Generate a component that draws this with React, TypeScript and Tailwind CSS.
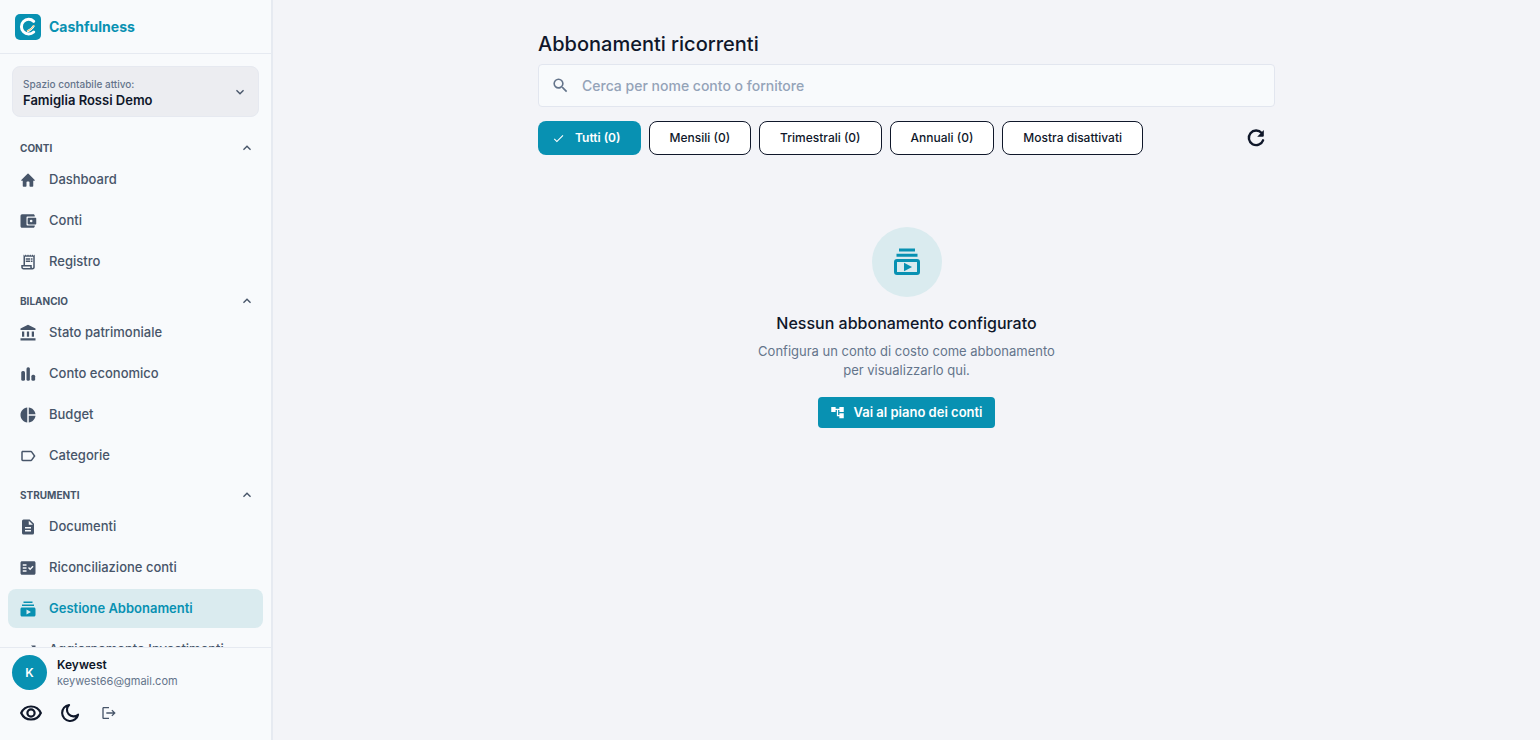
import { useState } from 'react';
import type { IconType } from 'react-icons';
import {
  MdAccountBalance,
  MdAccountTree,
  MdCheck,
  MdFactCheck,
  MdKeyboardArrowDown,
  MdKeyboardArrowUp,
  MdLabelOutline,
  MdLogout,
  MdOutlineReceiptLong,
  MdPieChart,
  MdSearch,
  MdSubscriptions,
  MdTrendingUp,
} from 'react-icons/md';

type IconProps = { size?: number; className?: string };

function HomeIcon({ size = 18, className }: IconProps) {
  return (
    <svg width={size} height={size} viewBox="0 0 24 24" fill="currentColor" className={className}>
      <path d="M10 20v-5c0-.6.4-1 1-1h2c.6 0 1 .4 1 1v5c0 .6.4 1 1 1h3c.6 0 1-.4 1-1v-7h1.700c.5 0 .7-.6.3-.9L12.700 3.600a1 1 0 0 0-1.300 0L3 12.100c-.4.300-.2.900.300.900H5v7c0 .6.400 1 1 1h3c.6 0 1-.4 1-1z" />
    </svg>
  );
}

function WalletIcon({ size = 18, className }: IconProps) {
  return (
    <svg width={size} height={size} viewBox="0 0 24 24" fill="currentColor" className={className}>
      <path d="M10 17V7c0-.6.400-1 1-1h10V5c0-1.100-.9-2-2-2H4a2 2 0 0 0-2 2v14c0 1.100.9 2 2 2h15c1.100 0 2-.9 2-2v-1H11c-.6 0-1-.4-1-1z" />
      <path fillRule="evenodd" d="M13 7.500c-.8 0-1.500.700-1.500 1.500v6c0 .8.700 1.500 1.500 1.500h9c.6 0 1-.4 1-1v-7c0-.6-.4-1-1-1h-9zm3.200 6.300a1.800 1.800 0 1 1 0-3.600 1.800 1.800 0 0 1 0 3.600z" />
    </svg>
  );
}

function BarsIcon({ size = 18, className }: IconProps) {
  return (
    <svg width={size} height={size} viewBox="0 0 24 24" fill="currentColor" className={className}>
      <rect x="3" y="8" width="5" height="13" rx="2" />
      <rect x="10" y="3" width="4.500" height="18" rx="2" />
      <rect x="16.500" y="13" width="5" height="8" rx="2" />
    </svg>
  );
}

function DocumentIcon({ size = 18, className }: IconProps) {
  return (
    <svg width={size} height={size} viewBox="0 0 24 24" fill="currentColor" className={className}>
      <path
        fillRule="evenodd"
        d="M14.200 2H6a2 2 0 0 0-2 2v16c0 1.100.9 2 2 2h12a2 2 0 0 0 2-2V7.800L14.200 2zM16 18H8v-2h8v2zm0-4H8v-2h8v2zm-3-5V3.500L18.500 9H13z"
      />
    </svg>
  );
}

function EyeIcon() {
  return (
    <svg width="24" height="24" viewBox="0 0 24 24" fill="none" stroke="currentColor" strokeWidth="2.200">
      <path d="M2.200 12C4 8 7.600 5.500 12 5.500S20 8 21.800 12C20 16 16.400 18.500 12 18.500S4 16 2.200 12z" />
      <circle cx="12" cy="12" r="3.600" />
    </svg>
  );
}

function MoonIcon() {
  return (
    <svg
      width="22"
      height="22"
      viewBox="0 0 24 24"
      fill="none"
      stroke="currentColor"
      strokeWidth="2.300"
      strokeLinecap="round"
      strokeLinejoin="round"
    >
      <path d="M11 3.200a8.800 8.800 0 1 0 9.800 10.600A6.900 6.900 0 0 1 11 3.200z" />
    </svg>
  );
}

function RefreshIcon() {
  return (
    <svg width="22" height="22" viewBox="0 0 24 24" aria-hidden="true">
      <path d="M18.200 6.500A8 8 0 1 0 19.700 14.500" fill="none" stroke="currentColor" strokeWidth="2.600" strokeLinecap="round" />
      <path d="M20.500 3.300v6.200c0 .6-.4 1-1 1h-6.200z" fill="currentColor" />
    </svg>
  );
}

function SubscriptionsIcon() {
  return (
    <svg width="32" height="32" viewBox="0 0 32 32" fill="none" stroke="currentColor" strokeWidth="3" aria-hidden="true">
      <path d="M8 4h16M5.500 9.200h21" />
      <rect x="4.500" y="14.500" width="23" height="13" rx="1.500" />
      <path d="M13 16.800v8.400l8-4.200z" fill="currentColor" stroke="none" />
    </svg>
  );
}

function Logo() {
  return (
    <svg width="26" height="26" viewBox="0 0 26 26" aria-hidden="true">
      <rect width="26" height="26" rx="5" fill="#0891b2" />
      <path d="M18.700 7.300A7.300 7.300 0 1 0 18.700 18" fill="none" stroke="#fff" strokeWidth="3" strokeLinecap="round" />
      <path d="M12 17.500c3-1 5-2.500 7-6" fill="none" stroke="#fff" strokeWidth="2" />
      <path d="M12 17c3-.8 5-2.500 7.300-6" fill="none" stroke="#f5b95f" strokeWidth="1" />
    </svg>
  );
}

type NavItem = { label: string; icon: IconType | typeof WalletIcon };

const SECTIONS: { title: string; items: NavItem[] }[] = [
  {
    title: 'CONTI',
    items: [
      { label: 'Dashboard', icon: HomeIcon },
      { label: 'Conti', icon: WalletIcon },
      { label: 'Registro', icon: MdOutlineReceiptLong },
    ],
  },
  {
    title: 'BILANCIO',
    items: [
      { label: 'Stato patrimoniale', icon: MdAccountBalance },
      { label: 'Conto economico', icon: BarsIcon },
      { label: 'Budget', icon: MdPieChart },
      { label: 'Categorie', icon: MdLabelOutline },
    ],
  },
  {
    title: 'STRUMENTI',
    items: [
      { label: 'Documenti', icon: DocumentIcon },
      { label: 'Riconciliazione conti', icon: MdFactCheck },
      { label: 'Gestione Abbonamenti', icon: MdSubscriptions },
      { label: 'Aggiornamento Investimenti', icon: MdTrendingUp },
    ],
  },
];

const FILTERS = ['Tutti (0)', 'Mensili (0)', 'Trimestrali (0)', 'Annuali (0)', 'Mostra disattivati'];

function Sidebar() {
  const [active, setActive] = useState('Gestione Abbonamenti');

  return (
    <aside className="flex w-[273px] shrink-0 flex-col border-r-2 border-[#e6eaf1] bg-[#f8fafc]">
      <div className="flex h-[54px] shrink-0 items-center gap-2 border-b border-[#e6eaf1] px-[15px]">
        <Logo />
        <span className="text-sm font-bold text-[#0891b2]">Cashfulness</span>
      </div>

      <button className="mx-3 mt-3 flex h-[51px] shrink-0 items-center justify-between rounded-lg border border-[#e6e9f0] bg-[#ecedf1] px-2.5 text-left">
        <span className="flex flex-col">
          <span className="text-[10px] leading-4 font-medium text-[#64748b]">Spazio contabile attivo:</span>
          <span className="text-[13px] leading-4 font-semibold text-[#0f172a]">Famiglia Rossi Demo</span>
        </span>
        <MdKeyboardArrowDown size={16} className="text-[#475569]" />
      </button>

      <nav className="mt-3 min-h-0 flex-1 overflow-hidden">
        {SECTIONS.map((section) => (
          <div key={section.title} className="flex flex-col">
            <button className="flex h-[30px] shrink-0 items-center justify-between pt-2 pr-4 pl-5 text-[#475569]">
              <span className="text-[10px] font-bold">{section.title}</span>
              <MdKeyboardArrowUp size={16} />
            </button>
            {section.items.map(({ label, icon: Icon }) => (
              <a
                key={label}
                href="#"
                onClick={() => setActive(label)}
                className={
                  label === active
                    ? 'mx-2 my-px flex h-[39px] items-center gap-3 rounded-lg bg-[#daebef] px-[11px] text-[13px] font-semibold text-[#0891b2]'
                    : 'mx-2 my-px flex h-[39px] items-center gap-3 rounded-lg px-[11px] text-[13px] font-medium text-[#475569]'
                }
              >
                <Icon size={18} className="shrink-0" />
                {label}
              </a>
            ))}
          </div>
        ))}
      </nav>

      {/* User area */}
      <div className="h-[93px] shrink-0 border-t border-[#e6eaf1] px-3 pt-[7px]">
        <div className="flex items-center gap-2.5">
          <div className="flex h-[35px] w-[35px] items-center justify-center rounded-full bg-[#0891b2] text-xs font-semibold text-white">
            K
          </div>
          <div>
            <p className="text-xs leading-4 font-semibold text-[#0f172a]">Keywest</p>
            <p className="text-[11px] leading-4 text-[#64748b]">keywest66@gmail.com</p>
          </div>
        </div>
        <div className="mt-[11px] flex items-center gap-4 pl-[7px] text-[#0f172a]">
          <button aria-label="Mostra importi">
            <EyeIcon />
          </button>
          <button aria-label="Tema scuro">
            <MoonIcon />
          </button>
          <button aria-label="Esci" className="pl-1 text-[#475569]">
            <MdLogout size={16} />
          </button>
        </div>
      </div>
    </aside>
  );
}

export default function App() {
  const [filter, setFilter] = useState(FILTERS[0]);

  return (
    <div className="flex h-screen bg-[#f3f4f8] font-[Inter,sans-serif]">
      <Sidebar />

      <main className="min-w-0 flex-1 overflow-hidden">
        <div className="mx-auto max-w-[737px] pt-[30px]">
          <h1 className="text-xl leading-7 font-medium text-[#0f172a]">Abbonamenti ricorrenti</h1>

          <label className="mt-1.5 flex h-[43px] items-center gap-3 rounded border border-[#e2e6ef] bg-[#f8fafc] px-3">
            <MdSearch size={19} className="shrink-0 text-[#64748b]" />
            <input
              type="text"
              aria-label="Cerca"
              placeholder="Cerca per nome conto o fornitore"
              className="w-full bg-transparent text-sm font-medium text-[#0f172a] outline-none placeholder:text-[#94a3b8]"
            />
          </label>

          <div className="mt-3.5 flex items-center gap-2">
            {FILTERS.map((name) => (
              <button
                key={name}
                onClick={() => setFilter(name)}
                className={
                  name === filter
                    ? 'flex h-[34px] items-center gap-2.5 rounded-lg bg-[#0891b2] pr-5 pl-3.5 text-xs font-semibold text-white'
                    : 'flex h-[34px] items-center rounded-lg border border-[#0f172a] bg-white px-5 text-xs font-medium text-[#0f172a]'
                }
              >
                {name === filter && <MdCheck size={13} />}
                {name}
              </button>
            ))}
            <button aria-label="Aggiorna" className="mr-2 ml-auto text-[#0f172a]">
              <RefreshIcon />
            </button>
          </div>

          {/* Empty state */}
          <div className="mt-[72px] flex flex-col items-center text-center">
            <div className="flex h-[70px] w-[70px] items-center justify-center rounded-full bg-[#daebef] text-[#0891b2]">
              <SubscriptionsIcon />
            </div>
            <h2 className="mt-3.5 text-base leading-6 font-medium text-[#0f172a]">Nessun abbonamento configurato</h2>
            <p className="mt-[7px] text-[13px] leading-[19px] text-[#64748b]">
              Configura un conto di costo come abbonamento
              <br />
              per visualizzarlo qui.
            </p>
            <button className="mt-[17px] flex h-[31px] items-center gap-2 rounded bg-[#0891b2] px-3 text-[13px] font-semibold text-white">
              <MdAccountTree size={15} />
              Vai al piano dei conti
            </button>
          </div>
        </div>
      </main>
    </div>
  );
}
